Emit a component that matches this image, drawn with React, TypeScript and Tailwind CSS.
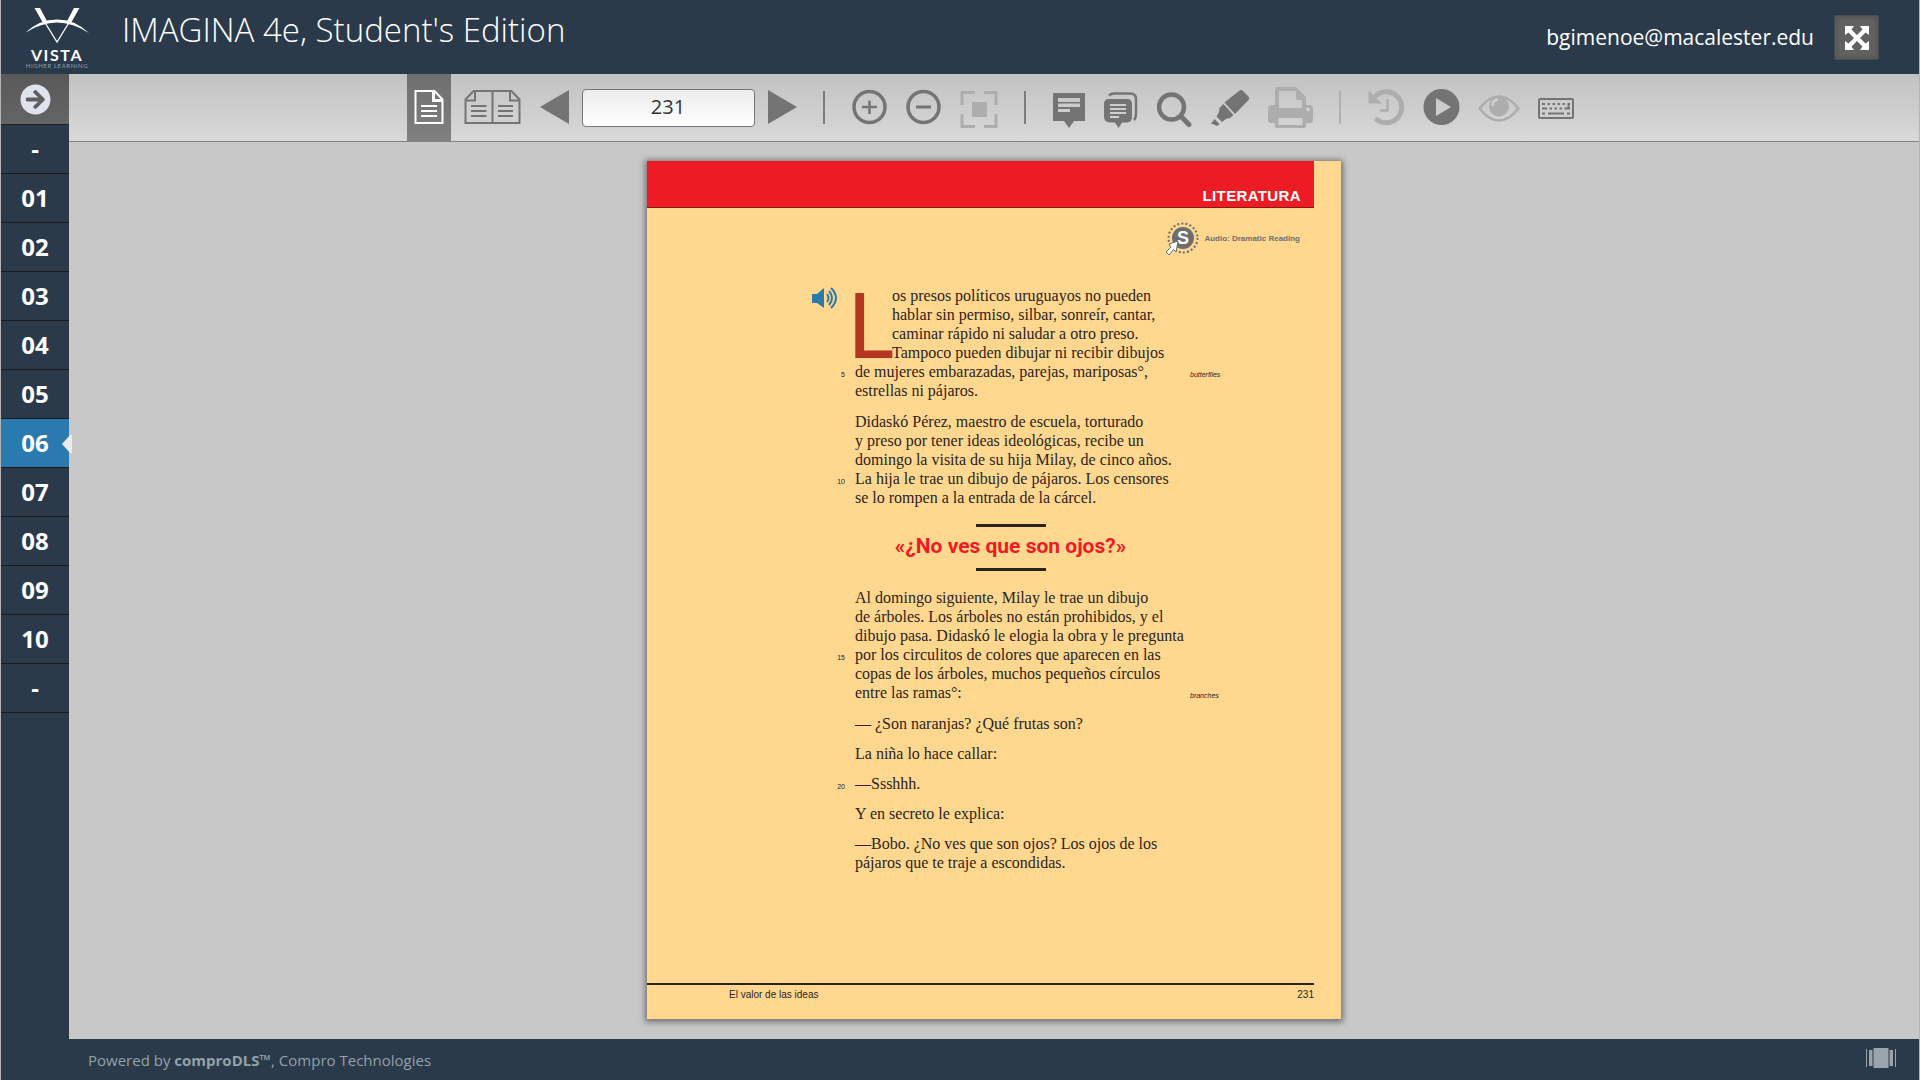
import { useState } from "react";
import type { ReactNode } from "react";
import { FaArrowCircleRight } from "react-icons/fa";

const units = ["-", "01", "02", "03", "04", "05", "06", "07", "08", "09", "10", "-"];

interface Line {
  text: string;
  num?: number;
  gloss?: string;
}

const opening = [
  "os presos políticos uruguayos no pueden",
  "hablar sin permiso, silbar, sonreír, cantar,",
  "caminar rápido ni saludar a otro preso.",
  "Tampoco pueden dibujar ni recibir dibujos",
];

const openingRest: Line[] = [
  { text: "de mujeres embarazadas, parejas, mariposas°,", num: 5, gloss: "butterflies" },
  { text: "estrellas ni pájaros." },
];

const visit: Line[] = [
  { text: "Didaskó Pérez, maestro de escuela, torturado" },
  { text: "y preso por tener ideas ideológicas, recibe un" },
  { text: "domingo la visita de su hija Milay, de cinco años." },
  { text: "La hija le trae un dibujo de pájaros. Los censores", num: 10 },
  { text: "se lo rompen a la entrada de la cárcel." },
];

const trees: Line[] = [
  { text: "Al domingo siguiente, Milay le trae un dibujo" },
  { text: "de árboles. Los árboles no están prohibidos, y el" },
  { text: "dibujo pasa. Didaskó le elogia la obra y le pregunta" },
  { text: "por los circulitos de colores que aparecen en las", num: 15 },
  { text: "copas de los árboles, muchos pequeños círculos" },
  { text: "entre las ramas°:", gloss: "branches" },
];

const dialogue: Line[][] = [
  [{ text: "— ¿Son naranjas? ¿Qué frutas son?" }],
  [{ text: "La niña lo hace callar:" }],
  [{ text: "—Ssshhh.", num: 20 }],
  [{ text: "Y en secreto le explica:" }],
  [{ text: "—Bobo. ¿No ves que son ojos? Los ojos de los" }, { text: "pájaros que te traje a escondidas." }],
];

function VistaLogo() {
  return (
    <a href="#home" aria-label="Vista Higher Learning" className="flex w-16 flex-col items-center text-white">
      <svg width="64" height="36" viewBox="0 0 64 36" fill="currentColor">
        <path d="M9.500 0H15L22.500 14H17.500ZM54.500 0H49L41.500 14H46.500Z" />
        <path d="M19 13L32 34L45 13" fill="none" stroke="currentColor" strokeWidth="1.300" />
        <path d="M0 25Q14 11.500 32 11.500T64 25Q48 14.500 32 14.500T0 25Z" />
      </svg>
      <span className="mt-[3px] font-['Lato','Open_Sans',sans-serif] text-base leading-4 font-bold tracking-widest">VISTA</span>
      <span className="font-['Lato','Open_Sans',sans-serif] text-[6px] leading-[6px] tracking-widest text-slate-400">HIGHER LEARNING</span>
    </a>
  );
}

function Header() {
  return (
    <header className="flex h-[74px] shrink-0 items-start bg-[#2a3a4a] pr-10 pl-6 text-white">
      <div className="pt-2">
        <VistaLogo />
      </div>
      <h1 className="pt-2 pl-[33px] text-[33px] leading-[43px] font-light">IMAGINA 4e, Student's Edition</h1>
      <div className="ml-auto flex items-center gap-5 pt-[15px]">
        <span className="text-[21px] leading-[45px]">bgimenoe@macalester.edu</span>
        <button aria-label="Full screen" className="flex size-[45px] items-center justify-center rounded-xs border border-[#4c4c4c] bg-[#626262] shadow-[inset_0_0_6px_#4c4c4c]">
          <svg width="24" height="24" viewBox="0 0 24 24" fill="currentColor">
            <path d="M0 0H9L6.500 3.500L12 9L17.500 3.500L15 0H24V9L20.500 6.500L15 12L20.500 17.500L24 15V24H15L17.500 20.500L12 15L6.500 20.500L9 24H0V15L3.500 17.500L9 12L3.500 6.500L0 9Z" />
          </svg>
        </button>
      </div>
    </header>
  );
}

function UnitNav() {
  const [active, setActive] = useState(6);
  return (
    <nav aria-label="Units" className="w-[68px] shrink-0 bg-[#2a3a4a] text-white">
      <button aria-label="Open contents" className="flex h-[51px] w-full items-center justify-center border-b border-[#222] bg-linear-to-b from-[#595959] to-[#656565]">
        <FaArrowCircleRight size={31} color="#dfe3eb" />
      </button>
      {units.map((unit, i) => (
        <button
          key={i}
          onClick={() => setActive(i)}
          className={`relative block h-[49px] w-full border-b border-[#1a1a1a] text-2xl leading-[48px] font-bold ${i === active ? "bg-[#2a7ab0]" : ""}`}
        >
          {unit}
          {i === active && (
            <svg className="absolute top-[16px] -right-[3px]" width="10" height="18" viewBox="0 0 10 18" fill="#ececec">
              <path d="M0 9L8 0H10V18H8Z" />
            </svg>
          )}
        </button>
      ))}
    </nav>
  );
}

function Tool({ label, width, disabled, children }: { label: string; width: number; disabled?: boolean; children: ReactNode }) {
  return (
    <button aria-label={label} disabled={disabled} className="shrink-0 text-[#747474] disabled:text-[#adadad]">
      <svg width={width} height="41" viewBox={`0 0 ${width} 41`} fill="currentColor">
        {children}
      </svg>
    </button>
  );
}

function Separator({ faint }: { faint?: boolean }) {
  return (
    <span className="mx-[7px] flex w-[3px] shrink-0 justify-center">
      <span className={`h-[33px] w-[2px] ${faint ? "bg-[#b0b0b0]" : "bg-[#7c7c7c]"}`} />
    </span>
  );
}

function Toolbar() {
  const [page, setPage] = useState("231");
  return (
    <div className="flex h-[68px] items-center justify-center gap-[19px] border-b border-[#808583] bg-linear-to-b from-[#c2c2c2] to-[#d8d8d8] pr-2">
      <div className="flex h-full items-center gap-[13px]">
        <button aria-label="Single page" className="flex h-full w-11 items-center justify-center bg-linear-to-b from-[#6f6f6f] to-[#808080] text-white">
          <svg width="30" height="41" viewBox="0 0 30 41" fill="none" stroke="currentColor" strokeWidth="2">
            <path d="M1.500 4H20.500L28.500 12.500V36H1.500Z" />
            <path d="M19.500 4V13.500H28.500" strokeWidth="3" />
            <path d="M7 19H23M7 24H23M7 29H23" />
          </svg>
        </button>
        <Tool label="Double page" width={57}>
          <g fill="none" stroke="currentColor" strokeWidth="2">
            <path d="M1.500 12.500L9.500 4H47.500L55.500 12.500V36H1.500ZM28.500 4V36" />
            <path d="M11 4V13.500H2M46 4V13.500H55" />
            <path d="M7 19H22.500M7 24H22.500M7 29H22.500M34 19H49M34 24H49M34 29H49" />
          </g>
        </Tool>
      </div>
      <div className="flex items-center gap-[13px]">
        <Tool label="Previous page" width={29}>
          <path d="M0 20L29 3V37Z" />
        </Tool>
        <input
          aria-label="Page number"
          value={page}
          onChange={(e) => setPage(e.target.value)}
          className="h-[38px] w-[173px] rounded-sm border border-[#777] bg-linear-to-b from-[#ececec] to-white pb-[3px] text-center text-xl text-[#333]"
        />
        <Tool label="Next page" width={29}>
          <path d="M0 3L29 20L0 37Z" />
        </Tool>
      </div>
      <Separator />
      <Tool label="Zoom in" width={35}>
        <circle cx="17.500" cy="20" r="15.500" fill="none" stroke="currentColor" strokeWidth="3.500" />
        <path d="M10 20H25M17.500 13.500V27" stroke="currentColor" strokeWidth="2.500" />
      </Tool>
      <Tool label="Zoom out" width={35}>
        <circle cx="17.500" cy="20" r="15.500" fill="none" stroke="currentColor" strokeWidth="3.500" />
        <path d="M10 20H25" stroke="currentColor" strokeWidth="3" />
      </Tool>
      <Tool label="Fit to page" width={38} disabled>
        <path d="M2 18V5.500H15M24 5.500H36V18M36 27V39.500H24M15 39.500H2V27" fill="none" stroke="currentColor" strokeWidth="3" />
        <path d="M12 15H27V30H12Z" />
      </Tool>
      <Separator />
      <Tool label="Add note" width={32}>
        <path fillRule="evenodd" d="M0 6H32V34H21L16 41L11 34H0ZM5 11V15H27V11ZM5 16.500V20H27V16.500ZM5 22V25H17V22Z" />
      </Tool>
      <Tool label="All notes" width={34}>
        <path fillRule="evenodd" d="M5 12H23Q28 12 28 17V30Q28 35 23 35.500H18L14.500 41L11 35.500H6Q0 35 0 30V17Q0 12 5 12ZM6 17V19H22V17ZM6 21V23H22V21ZM6 25V27H22V25ZM6 29V31H15V29Z" />
        <path d="M5 8.500Q7 6.500 10 6.500H26Q32 6.500 32 12V27Q32 31 30 33" fill="none" stroke="currentColor" strokeWidth="2.500" />
      </Tool>
      <Tool label="Search" width={35}>
        <circle cx="14.500" cy="20" r="12.500" fill="none" stroke="currentColor" strokeWidth="4.500" />
        <path d="M24 29.500L32 37.500" stroke="currentColor" strokeWidth="5" strokeLinecap="round" />
      </Tool>
      <Tool label="Highlighter" width={38}>
        <path d="M13.500 15.500L28 4Q30 2 32 4L37 9Q39 11 37.500 13L24 27Z" />
        <path d="M12.500 17L22.500 28L19 31L15 32L11 35L5.500 29.500L8 25L8.500 21Z" />
        <path d="M3.500 32L8.500 37L6.500 39L0 36.500Z" />
      </Tool>
      <Tool label="Print" width={45} disabled>
        <path fillRule="evenodd" d="M7 18V3Q7 0 10 0H28L38 10V18H41Q45 18 45 22V33Q45 36 42 36H38V39Q38 41 36 41H9Q7 41 7 39V36H3Q0 36 0 33V22Q0 18 4 18ZM11 4V21H34V13H30Q28 13 28 11V4ZM10.500 31V38H34.500V31ZM40 20.500A2 2 0 1 0 40 24.500A2 2 0 1 0 40 20.500Z" />
      </Tool>
      <Separator faint />
      <div className="flex items-center gap-[18px]">
        <Tool label="History" width={37} disabled>
          <path d="M7 9.500A15.500 15.500 0 1 1 7.500 31.500" fill="none" stroke="currentColor" strokeWidth="5" />
          <path d="M0.500 3.500V16.500H14Z" />
          <path d="M19.500 12V23.500H12" fill="none" stroke="currentColor" strokeWidth="2.500" />
        </Tool>
        <Tool label="Play" width={37}>
          <path fillRule="evenodd" d="M18.500 2A18 18 0 1 0 18.500 38A18 18 0 1 0 18.500 2ZM13 11L28 20L13 29Z" />
        </Tool>
        <Tool label="Show answers" width={42} disabled>
          <path d="M1.500 21.500Q11 9.500 21 9.500T40.500 21.500Q31 33.500 21 33.500T1.500 21.500Z" fill="none" stroke="currentColor" strokeWidth="2.500" />
          <circle cx="21" cy="19.500" r="10" />
          <path d="M14.500 19Q14.500 13 20 12.500" fill="none" stroke="#d0d0d0" strokeWidth="2.500" />
        </Tool>
        <Tool label="Keyboard" width={36}>
          <rect x="1" y="12" width="34" height="19" rx="1" fill="none" stroke="currentColor" strokeWidth="2" />
          <path
            d="M4 17H7M9.500 17H12M14.500 17H17M19.500 17H22M24.500 17H27M29.500 17H32M4 21.500H9M11.500 21.500H14M16.500 21.500H19M21.500 21.500H24M26.500 21.500H32M30.500 16V22M4 26.500H7M10 26.500H26M29 26.500H32"
            stroke="currentColor"
            strokeWidth="2"
          />
        </Tool>
      </div>
    </div>
  );
}

function TextLines({ lines }: { lines: Line[] }) {
  return (
    <div>
      {lines.map((line) => (
        <div key={line.text} className="grid grid-cols-[198px_325px_1fr] items-end gap-x-[10px]">
          <span className="text-right font-['Liberation_Sans',sans-serif] text-[7px] leading-3">{line.num}</span>
          <p className="whitespace-nowrap">{line.text}</p>
          <span className="font-['Liberation_Sans',sans-serif] text-[7px] leading-3 italic">{line.gloss}</span>
        </div>
      ))}
    </div>
  );
}

function AudioBadge() {
  return (
    <svg width="33" height="33" viewBox="0 0 33 33">
      <circle cx="17" cy="16" r="14.500" fill="none" stroke="#6d6e71" strokeWidth="2" strokeDasharray="2 2.140" />
      <circle cx="17" cy="16" r="11" fill="#6d6e71" />
      <text x="17" y="22" textAnchor="middle" fill="#fff" className="font-['Liberation_Sans',sans-serif] text-[18px] font-bold">S</text>
      <path d="M12 19L10 30L7.500 27.500L3 33L0 30L5 25L3 22Z" fill="#fff" stroke="#6d6e71" strokeWidth="1" />
    </svg>
  );
}

function BookPage() {
  return (
    <article className="flex aspect-[694/858] w-full max-w-[694px] flex-col bg-[#ffd78f] font-['Liberation_Serif',serif] text-base leading-[19px] text-[#2b241c] shadow-[0_1px_6px_2px_#707070]">
      <div className="mr-[27px] flex h-[47px] items-end justify-end border-b border-[#8a1a10] bg-[#ed1c24] pr-[13px] pb-[3px]">
        <h2 className="font-['Liberation_Sans',sans-serif] text-[15px] leading-4 font-bold tracking-wide text-white">LITERATURA</h2>
      </div>
      <a href="#audio" className="flex items-center justify-end gap-[5px] pt-[14px] pr-[41px] pb-[31px] font-['Liberation_Sans',sans-serif] text-[8px] font-bold text-[#6d6e71]">
        <AudioBadge />
        Audio: Dramatic Reading
      </a>

      <div className="flex flex-col gap-3">
        <div>
          <div className="flex h-[76px]">
            <div className="flex w-[200px] items-start justify-end pt-px pr-2">
              <button aria-label="Listen">
                <svg width="27" height="22" viewBox="0 0 27 22" fill="#2a7ab0">
                  <path d="M0 7H5L12 1V21L5 16H0Z" />
                  <path d="M15 7Q18 11 15 15M17 4Q23 11 17 18M19 1Q29 11 19 21" fill="none" stroke="#2a7ab0" strokeWidth="2" />
                </svg>
              </button>
            </div>
            <span className="w-[45px] font-['Lato',sans-serif] text-[91px] leading-[74px] text-[#b33522]">L</span>
            <div className="whitespace-nowrap">
              {opening.map((text) => (
                <p key={text}>{text}</p>
              ))}
            </div>
          </div>
          <TextLines lines={openingRest} />
        </div>
        <TextLines lines={visit} />
      </div>

      <blockquote className="my-[17px] ml-[208px] flex w-[311px] flex-col items-center">
        <hr className="w-[70px] border-t-[3px] border-[#2b241c]" />
        <p className="pt-[7px] pb-[9px] font-['Roboto',sans-serif] text-[21px] leading-[25px] font-bold whitespace-nowrap text-[#ed1c24]">
          «¿No ves que son ojos?»
        </p>
        <hr className="w-[70px] border-t-[3px] border-[#2b241c]" />
      </blockquote>

      <div className="flex flex-col gap-3">
        <TextLines lines={trees} />
        <div className="flex flex-col gap-[11px]">
          {dialogue.map((lines) => (
            <TextLines key={lines[0].text} lines={lines} />
          ))}
        </div>
      </div>

      <footer className="mt-auto mr-[27px] flex h-9 justify-between border-t-2 border-[#2b241c] pl-[82px] font-['Liberation_Sans',sans-serif] text-[10px]">
        <span>El valor de las ideas</span>
        <span>231</span>
      </footer>
    </article>
  );
}

function Footer() {
  return (
    <footer className="flex h-[41px] shrink-0 items-center justify-between bg-[#2a3a4a] pr-[23px] pl-[87px] text-[15px] text-[#93a1a8]">
      <p className="pt-px">
        Powered by <b>comproDLS™</b>, Compro Technologies
      </p>
      <button aria-label="Thumbnails" className="pb-1 text-[#9aa4ab]">
        <svg width="30" height="20" viewBox="0 0 30 20" fill="currentColor">
          <path d="M7.500 0H22.500V20H7.500ZM3 2H6.500V18H3ZM23.500 2H27V18H23.500ZM0 1H1V19H0ZM29 1H30V19H29Z" />
        </svg>
      </button>
    </footer>
  );
}

export default function App() {
  return (
    <div className="flex min-h-screen flex-col border-x border-[#b4b4b4] bg-[#c8c8c8] font-['Open_Sans',sans-serif]">
      <Header />
      <div className="flex grow">
        <UnitNav />
        <main className="min-w-0 grow">
          <Toolbar />
          <div className="flex justify-center pt-[19px] pb-5">
            <BookPage />
          </div>
        </main>
      </div>
      <Footer />
    </div>
  );
}
